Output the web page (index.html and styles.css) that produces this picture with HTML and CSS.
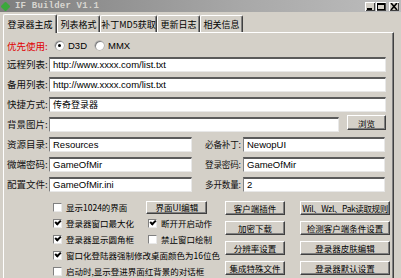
FILE: index.html
```html
<!DOCTYPE html>
<html>
<head>
<meta charset="utf-8">
<link rel="stylesheet" href="styles.css">
</head>
<body>
<div class="window">
  <div class="titlebar">
    <span class="appicon"></span>
    <span class="title">IF Builder V1.1</span>
    <div class="wbtns">
      <span class="wbtn"><svg width="8" height="7" viewBox="0 0 8 7"><rect x="1" y="5" width="5" height="2" fill="#000"/></svg></span>
      <span class="wbtn"><svg width="8" height="7" viewBox="0 0 8 7"><rect x="0.5" y="0.5" width="7" height="6" fill="none" stroke="#000"/><rect x="0" y="0" width="8" height="2" fill="#000"/></svg></span>
      <span class="wbtn close"><svg width="8" height="7" viewBox="0 0 8 7"><path d="M1 0 L7 7 M7 0 L1 7" stroke="#000" stroke-width="1.6"/></svg></span>
    </div>
  </div>
  <div class="tabs">
    <span class="tab active">登录器主成</span>
    <span class="tab">列表格式</span>
    <span class="tab">补丁MD5获取</span>
    <span class="tab">更新日志</span>
    <span class="tab">相关信息</span>
  </div>
  <div class="panel">
    <div class="prio">
      <span class="red">优先使用:</span>
      <span class="radio on"></span><span class="rtext">D3D</span>
      <span class="radio"></span><span class="rtext">MMX</span>
    </div>
    <div class="row"><span class="lbl">远程列表:</span><span class="input">http://www.xxxx.com/list.txt</span></div>
    <div class="row"><span class="lbl">备用列表:</span><span class="input">http://www.xxxx.com/list.txt</span></div>
    <div class="row"><span class="lbl">快捷方式:</span><span class="input cjk">传奇登录器</span></div>
    <div class="row"><span class="lbl">背景图片:</span><span class="input bg"></span><span class="btn browse">浏览</span></div>
    <div class="row"><span class="lbl">资源目录:</span><span class="input half">Resources</span><span class="lbl right">必备补丁:</span><span class="input rhalf">NewopUI</span></div>
    <div class="row"><span class="lbl">微端密码:</span><span class="input half">GameOfMir</span><span class="lbl right">登录密码:</span><span class="input rhalf">GameOfMir</span></div>
    <div class="row"><span class="lbl">配置文件:</span><span class="input half">GameOfMir.ini</span><span class="lbl right">多开数量:</span><span class="input rhalf">2</span></div>
    <div class="bottom">
      <div class="checks">
        <div class="crow"><span class="cb"></span><span class="ctext">显示1024的界面</span><span class="btn ui">界面UI编辑</span></div>
        <div class="crow"><span class="cb on"></span><span class="ctext w1">登录器窗口最大化</span><span class="cb on"></span><span class="ctext">断开开启动作</span></div>
        <div class="crow"><span class="cb on"></span><span class="ctext w1">登录器显示圆角框</span><span class="cb"></span><span class="ctext">禁止窗口绘制</span></div>
        <div class="crow"><span class="cb on"></span><span class="ctext">窗口化登陆器强制修改桌面颜色为16位色</span></div>
        <div class="crow"><span class="cb"></span><span class="ctext">启动时,显示登进界面红背景的对话框</span></div>
      </div>
      <div class="btncol mid">
        <span class="btn">客户端插件</span>
        <span class="btn">加密下载</span>
        <span class="btn">分辨率设置</span>
        <span class="btn">集成特殊文件</span>
      </div>
      <div class="btncol wide">
        <span class="btn tight">Wil、Wzl、Pak读取规则</span>
        <span class="btn">检测客户端条件设置</span>
        <span class="btn">登录器皮肤编辑</span>
        <span class="btn">登录器默认设置</span>
      </div>
    </div>
  </div>
</div>
</body>
</html>
```

FILE: styles.css
```css
html, body {
  margin: 0;
  padding: 0;
}
body {
  width: 401px;
  height: 278px;
  overflow: hidden;
  background: #d4d0c8;
  font-family: "Liberation Sans", "Noto Sans CJK SC", sans-serif;
  font-size: 9px;
  color: #000;
}
.window {
  width: 401px;
  height: 278px;
  background: #d4d0c8;
  display: flex;
  flex-direction: column;
}
.titlebar {
  height: 12px;
  flex: none;
  display: flex;
  align-items: center;
  background: linear-gradient(to right, #7e7e7e, #a8a8a8 60%, #bdbdbd);
}
.appicon {
  width: 7px;
  height: 7px;
  margin-left: 2px;
  background: #3aa83a;
  border-radius: 1px;
  transform: rotate(45deg);
}
.title {
  margin-left: 6px;
  font-family: "Liberation Mono", monospace;
  font-weight: bold;
  font-size: 9px;
  color: #d8d6d0;
  letter-spacing: 0.2px;
}
.wbtns {
  margin-left: auto;
  margin-right: 2px;
  display: flex;
  gap: 1px;
}
.wbtn {
  width: 10px;
  height: 9px;
  background: #d4d0c8;
  box-shadow: inset 1px 1px 0 #fff, inset -1px -1px 0 #404040;
  display: flex;
  align-items: center;
  justify-content: center;
}
.wbtn.close {
  margin-left: 2px;
}
.tabs {
  display: flex;
  align-items: flex-end;
  height: 20px;
  flex: none;
  padding-left: 3px;
  position: relative;
  z-index: 1;
}
.tab {
  height: 17px;
  display: flex;
  align-items: center;
  justify-content: center;
  white-space: nowrap;
  padding: 0;
  font-family: "Noto Sans CJK SC", sans-serif;
  font-size: 9px;
  border-top: 1px solid #fff;
  border-left: 1px solid #fff;
  border-right: 1px solid #404040;
  box-shadow: inset -1px 0 0 #808080;
  border-radius: 2px 2px 0 0;
  box-sizing: border-box;
}
.tab:nth-child(1) { width: 54px; }
.tab:nth-child(2) { width: 43px; }
.tab:nth-child(3) { width: 57px; }
.tab:nth-child(4) { width: 43px; }
.tab:nth-child(5) { width: 43px; }
.tab.active {
  height: 19px;
  background: #d4d0c8;
  margin-bottom: -1px;
}
.panel {
  margin-left: 3px;
  width: 391px;
  flex: 1;
  box-sizing: border-box;
  border-top: 1px solid #fff;
  border-left: 1px solid #fff;
  border-right: 1px solid #404040;
  box-shadow: inset -1px 0 0 #808080;
  padding: 3px 0 0 3px;
  font-family: "Noto Sans CJK SC", sans-serif;
  font-size: 9.5px;
}
.prio {
  height: 19px;
  display: flex;
  align-items: center;
}
.red {
  color: #e00000;
  width: 45px;
}
.radio {
  width: 9px;
  height: 9px;
  border-radius: 50%;
  background: #fff;
  box-shadow: inset 1px 1px 0 #808080, 0 0 0 0.5px #a0a0a0;
  margin-left: 3px;
  position: relative;
}
.radio.on::after {
  content: "";
  position: absolute;
  left: 3px;
  top: 3px;
  width: 3px;
  height: 3px;
  border-radius: 50%;
  background: #000;
}
.rtext {
  font-family: "Liberation Sans", sans-serif;
  margin-left: 4px;
  width: 24px;
}
.row {
  height: 20px;
  display: flex;
  align-items: flex-start;
}
.prio + .row {
  margin-top: 2px;
}
.lbl {
  width: 42px;
  height: 15px;
  line-height: 15px;
  white-space: nowrap;
  color: #111;
  flex: none;
}
.lbl.right {
  margin-left: 13px;
  width: 38px;
  font-size: 8.6px;
  letter-spacing: -0.2px;
}
.input {
  height: 15px;
  box-sizing: border-box;
  width: 337px;
  flex: none;
  background: #fff;
  border-top: 2px solid #5a5a5a;
  border-left: 1px solid #808080;
  border-bottom: 1px solid #e8e8e8;
  border-right: 1px solid #e8e8e8;
  padding-left: 3px;
  line-height: 12px;
  font-family: "Liberation Sans", sans-serif;
  font-size: 9.5px;
  white-space: nowrap;
  overflow: hidden;
}
.input.cjk {
  font-family: "Noto Sans CJK SC", sans-serif;
  font-size: 9px;
}
.input.bg {
  width: 290px;
}
.input.half {
  width: 143px;
}
.input.rhalf {
  width: 142px;
}
.btn {
  display: flex;
  align-items: center;
  justify-content: center;
  height: 14px;
  box-sizing: border-box;
  background: #d4d0c8;
  border-top: 1px solid #fff;
  border-left: 1px solid #fff;
  border-right: 1px solid #404040;
  border-bottom: 1px solid #404040;
  box-shadow: inset -1px -1px 0 #808080;
  font-family: "Noto Sans CJK SC", sans-serif;
  font-size: 8.5px;
  white-space: nowrap;
  overflow: hidden;
}
.btn.tight {
  letter-spacing: -0.4px;
}
.btn.browse {
  width: 39px;
  height: 15px;
  margin-left: 8px;
  margin-top: -2px;
}
.bottom {
  display: flex;
  padding-left: 46px;
  padding-top: 2px;
}
.checks {
  width: 172px;
  flex: none;
  display: flex;
  flex-direction: column;
}
.crow {
  height: 16px;
  display: flex;
  align-items: center;
  white-space: nowrap;
}
.cb {
  width: 9px;
  height: 9px;
  background: #fff;
  box-sizing: border-box;
  border-top: 1px solid #808080;
  border-left: 1px solid #808080;
  border-right: 1px solid #e8e8e8;
  border-bottom: 1px solid #e8e8e8;
  position: relative;
  flex: none;
}
.cb.on::after {
  content: "";
  position: absolute;
  left: 1px;
  top: 0px;
  width: 4px;
  height: 2px;
  border-left: 2px solid #000;
  border-bottom: 2px solid #000;
  transform: rotate(-45deg);
}
.ctext {
  margin-left: 4px;
  font-size: 8.5px;
}
.ctext.w1 {
  width: 82px;
}
.btn.ui {
  width: 61px;
  margin-left: 19px;
  height: 13px;
}
.btncol {
  display: flex;
  flex-direction: column;
  gap: 6px;
  padding-top: 2px;
  flex: none;
}
.btncol.mid {
  width: 60px;
}
.btncol.wide {
  width: 90px;
  margin-left: 15px;
}
```
